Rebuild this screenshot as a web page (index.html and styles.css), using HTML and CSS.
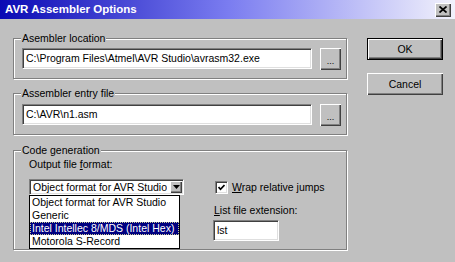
FILE: index.html
```html
<!DOCTYPE html>
<html lang="en">
<head>
  <meta charset="UTF-8" />
  <title>AVR Assembler Options</title>
  <link rel="stylesheet" href="styles.css">
</head>
<body>
  <div class="dialog">
    <div class="titlebar">
      <span class="title">AVR Assembler Options</span>
      <button class="close-btn" aria-label="Close">
        <svg width="8" height="7" viewBox="0 0 8 7"><path d="M0.5 0.5 L7.5 6.5 M7.5 0.5 L0.5 6.5" stroke="#000" stroke-width="1.7" fill="none"/></svg>
      </button>
    </div>

    <div class="content">
      <div class="groups">
        <div class="group">
          <div class="group-title">Asembler location</div>
          <div class="path-row">
            <div class="textbox path">C:\Program Files\Atmel\AVR Studio\avrasm32.exe</div>
            <button class="btn browse">...</button>
          </div>
        </div>

        <div class="group group-entry">
          <div class="group-title">Assembler entry file</div>
          <div class="path-row">
            <div class="textbox path">C:\AVR\n1.asm</div>
            <button class="btn browse">...</button>
          </div>
        </div>

        <div class="group group-code">
          <div class="group-title">Code generation</div>
          <div class="code-cols">
            <div class="col-left">
              <div class="field-label">Output file <u>f</u>ormat:</div>
              <div class="combo">
                <div class="combo-field">
                  <span class="combo-text">Object format for AVR Studio</span>
                  <span class="combo-arrow">
                    <svg width="7" height="4" viewBox="0 0 7 4"><polygon points="0,0 7,0 3.5,4" fill="#000"/></svg>
                  </span>
                </div>
                <ul class="combo-list">
                  <li>Object format for AVR Studio</li>
                  <li>Generic</li>
                  <li class="selected">Intel Intellec 8/MDS (Intel Hex)</li>
                  <li>Motorola S-Record</li>
                </ul>
              </div>
            </div>
            <div class="col-right">
              <label class="check-row">
                <span class="checkbox">
                  <svg width="7" height="7" viewBox="0 0 7 7"><path d="M0.5 3 L2.5 5.3 L6.5 1" stroke="#000" stroke-width="1.7" fill="none"/></svg>
                </span>
                <span><u>W</u>rap relative jumps</span>
              </label>
              <div class="field-label ext-label"><u>L</u>ist file extension:</div>
              <div class="textbox ext">lst</div>
            </div>
          </div>
        </div>
      </div>

      <div class="actions">
        <button class="btn default">OK</button>
        <button class="btn">Cancel</button>
      </div>
    </div>
  </div>
</body>
</html>
```

FILE: styles.css
```css
body {
  margin: 0;
  background: #c0c0c0;
  font-family: "Liberation Sans", Arial, sans-serif;
  font-size: 10.5px;
  line-height: 13px;
  color: #000;
}
.dialog {
  width: 455px;
  height: 262px;
  overflow: hidden;
}
.titlebar {
  height: 19px;
  display: flex;
  align-items: center;
  justify-content: space-between;
  padding: 0 4px 0 5px;
  background: linear-gradient(to right, #0a0ab4, #7a7cf0 50%, #f2f2fc);
}
.title {
  color: #fff;
  font-weight: bold;
  font-size: 11.5px;
}
.close-btn {
  width: 16px;
  height: 14px;
  padding: 0;
  border: none;
  background: #c0c0c0;
  display: flex;
  align-items: center;
  justify-content: center;
  box-shadow: inset 1px 1px #fff, inset -1px -1px #404040, inset -2px -2px #808080;
}
.content {
  display: flex;
  padding-left: 13px;
}
.groups {
  width: 334px;
}
.group {
  margin-top: 14px;
  border: 1px solid #808080;
  box-shadow: inset 1px 1px #fff, 1px 1px #fff;
  padding: 0 5px 8px 8px;
}
.group:first-child {
  margin-top: 19px;
}
.group-code {
  margin-top: 15px;
}
.group-title {
  width: max-content;
  margin: -7px 0 0 -1px;
  padding: 0 1px;
  background: #c0c0c0;
}
.path-row {
  display: flex;
  gap: 8px;
  margin-top: 3px;
}
.group-entry .path-row {
  margin-top: 4px;
}
.textbox {
  height: 21px;
  box-sizing: border-box;
  background: #fff;
  border: 1px solid;
  border-color: #808080 #fff #fff #808080;
  box-shadow: inset 1px 1px #404040, inset -1px -1px #dfdfdf;
  padding: 3px 0 0 3px;
  white-space: nowrap;
  overflow: hidden;
}
.path {
  flex: 0 0 290px;
}
.btn {
  font: inherit;
  background: #c0c0c0;
  border: none;
  padding: 0;
  box-shadow: inset 1px 1px #fff, inset -1px -1px #404040, inset -2px -2px #808080;
}
.browse {
  width: 21px;
  height: 22px;
  padding-top: 4px;
  font-size: 9px;
}
.code-cols {
  display: flex;
  margin-left: 7px;
}
.col-left {
  width: 185px;
  padding-top: 1px;
}
.field-label {
  height: 13px;
}
.combo {
  position: relative;
  width: 155px;
  margin-top: 8px;
}
.combo-field {
  height: 16px;
  box-sizing: border-box;
  background: #fff;
  border: 1px solid;
  border-color: #808080 #fff #fff #808080;
  box-shadow: inset 1px 1px #404040, inset -1px -1px #dfdfdf;
  display: flex;
  align-items: center;
  justify-content: space-between;
  padding: 1px 1px 1px 3px;
}
.combo-text {
  white-space: nowrap;
  overflow: hidden;
}
.combo-arrow {
  flex: none;
  width: 12px;
  height: 12px;
  box-sizing: border-box;
  display: flex;
  align-items: center;
  justify-content: center;
  background: #c0c0c0;
  box-shadow: inset 1px 1px #fff, inset -1px -1px #404040, inset -2px -2px #808080;
}
.combo-list {
  position: absolute;
  top: 16px;
  left: 0;
  width: 149px;
  margin: 0;
  padding: 0;
  list-style: none;
  background: #fff;
  border: 1px solid #000;
}
.combo-list li {
  height: 13px;
  padding-left: 2px;
  white-space: nowrap;
  overflow: hidden;
}
.combo-list .selected {
  background: #000080;
  color: #fff;
  outline: 1px dotted #c8c890;
  outline-offset: -1px;
}
.col-right {
  padding-top: 22px;
}
.check-row {
  display: flex;
  align-items: center;
  gap: 4px;
  height: 16px;
  margin-left: 1px;
}
.checkbox {
  width: 13px;
  height: 13px;
  box-sizing: border-box;
  background: #fff;
  border: 1px solid;
  border-color: #808080 #fff #fff #808080;
  box-shadow: inset 1px 1px #404040, inset -1px -1px #dfdfdf;
  display: flex;
  align-items: center;
  justify-content: center;
}
.ext-label {
  margin-top: 9px;
}
.ext {
  width: 66px;
  margin-top: 3px;
  margin-left: -1px;
}
.actions {
  display: flex;
  flex-direction: column;
  gap: 13px;
  margin: 19px 0 0 20px;
}
.actions .btn {
  width: 76px;
  height: 22px;
}
.actions .default {
  border: 1px solid #000;
}
```
